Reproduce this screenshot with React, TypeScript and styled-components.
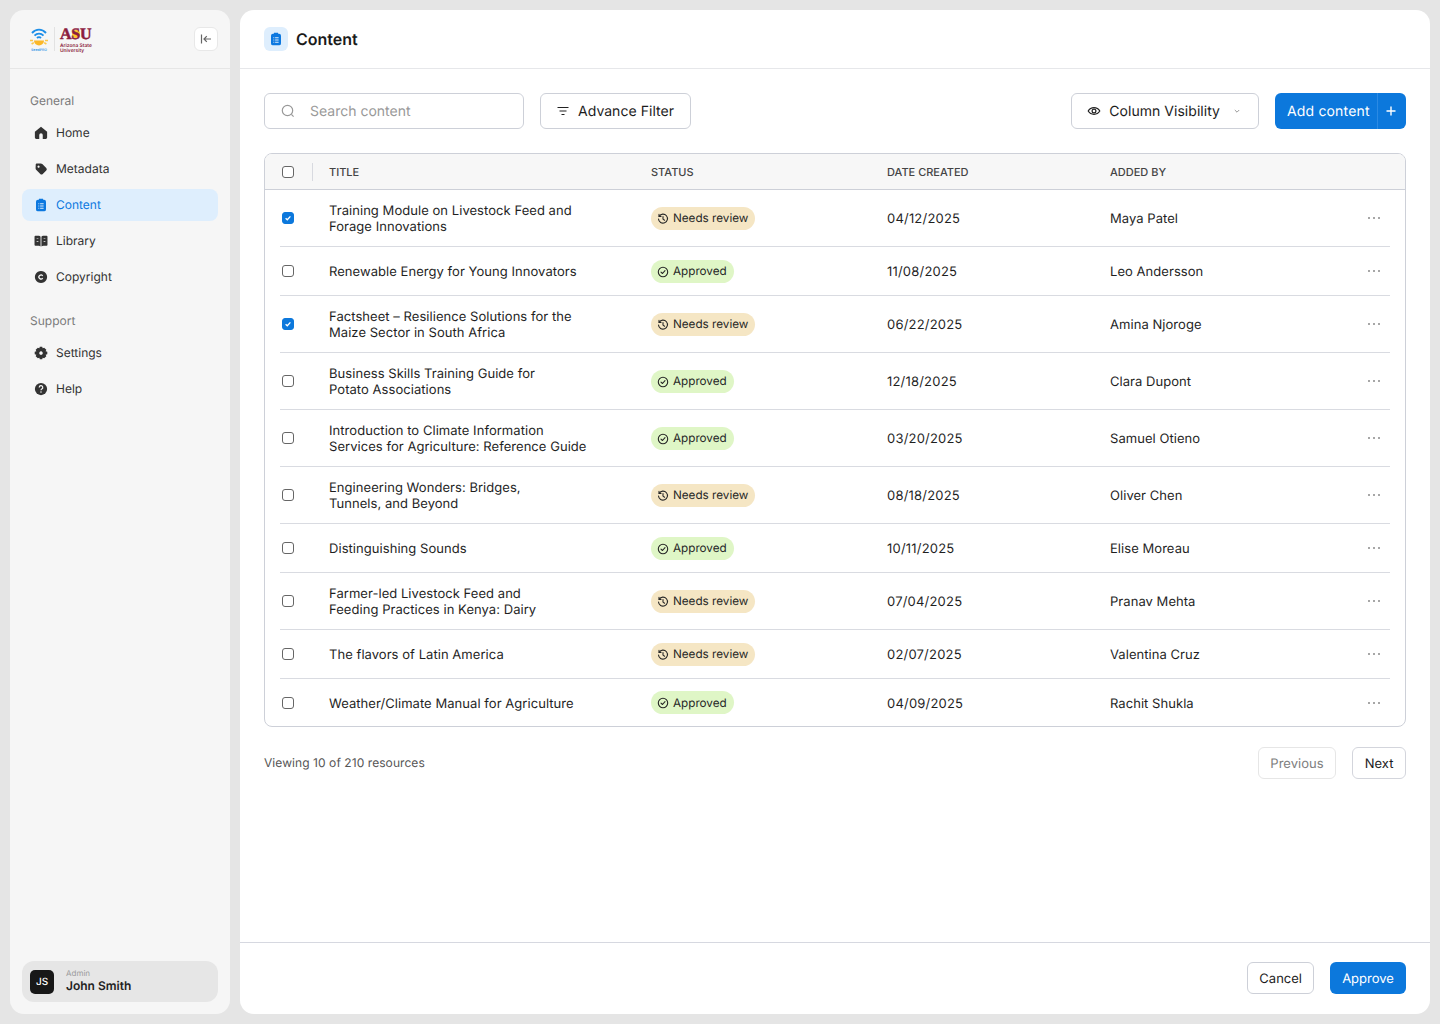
import React from "react";
import styled, { createGlobalStyle } from "styled-components";

const Global = createGlobalStyle`
  * { box-sizing: border-box; }
  html, body { margin: 0; padding: 0; }
  body { background: #e5e5e5; font-family: Inter, "Noto Sans", sans-serif; color: #1c1c1c; text-rendering: geometricPrecision; }
`;

const Page = styled.div`
  width: 1440px; height: 1024px; padding: 10px; display: flex; gap: 10px;
`;
const Sidebar = styled.aside`
  width: 220px; background: #f6f6f6; border-radius: 14px; display: flex; flex-direction: column; overflow: hidden;
`;
const SideHead = styled.div`
  height: 59px; flex: none; border-bottom: 1px solid #e6e6e6; display: flex; align-items: center; justify-content: space-between; padding: 0 12px 0 19px;
`;
const Logo = styled.div`display: flex; align-items: center; gap: 5px;`;
const SeedMark = styled.div`display: flex; flex-direction: column; align-items: center; width: 20px;`;
const SeedText = styled.span`font-size: 3.5px; line-height: 4px; font-weight: 600; color: #3f9be8; white-space: nowrap;`;
const LogoRule = styled.div`width: 1px; height: 24px; background: #e2e2e2;`;
const AsuMark = styled.div`display: flex; flex-direction: column; color: #8c1d40; position: relative; padding-top: 1px;`;
const AsuLetters = styled.span`position: relative; font-family: "Liberation Serif", serif; font-weight: 700; font-size: 16px; letter-spacing: -0.2px; -webkit-text-stroke: 0.5px #8c1d40;`;
const AsuSun = styled.i`position: absolute; left: 12px; top: 5px; width: 8px; height: 8px; border-radius: 50%; background: #ffc627;`;
const AsuName = styled.span`font-size: 4.9px; line-height: 5px; font-weight: 600; white-space: nowrap;`;
const Collapse = styled.button`
  width: 24px; height: 24px; padding: 0; background: #fff; border: 1px solid #e8e8e8; border-radius: 6px; display: flex; align-items: center; justify-content: center; color: #666;
`;
const Nav = styled.nav`flex: 1; padding: 24px 12px 0; display: flex; flex-direction: column;`;
const NavLabel = styled.div<{ $second?: boolean }>`
  font-size: 12px; line-height: 16px; color: #7b7b7b; padding-left: 8px; margin-top: ${p => (p.$second ? 20 : 0)}px; margin-bottom: 8px;
`;
const NavList = styled.div`display: flex; flex-direction: column; gap: 4px;`;
const NavItem = styled.a<{ $active?: boolean }>`
  height: 32px; border-radius: 8px; display: flex; align-items: center; gap: 8px; padding: 0 0 1px 12px; font-size: 12px;
  background: ${p => (p.$active ? "#deeefd" : "transparent")}; color: ${p => (p.$active ? "#0c78e0" : "#333")};
`;
const NavIcon = styled.svg`width: 14px; height: 14px; flex: none; fill: currentColor;`;
const UserCard = styled.div`
  margin: 0 12px 12px; height: 41px; border-radius: 12px; background: #e6e6e6; display: flex; align-items: center; gap: 12px; padding-left: 8px;
`;
const Avatar = styled.div`
  width: 24px; height: 24px; border-radius: 5px; background: #181818; color: #fff; font-size: 10px; font-weight: 500; display: flex; align-items: center; justify-content: center;
`;
const UserText = styled.div`display: flex; flex-direction: column; padding-bottom: 2px;`;
const UserRole = styled.span`font-size: 8px; line-height: 9px; color: #9a9a9a;`;
const UserName = styled.span`font-size: 12px; line-height: 15px; font-weight: 600; color: #222;`;

const Main = styled.main`
  width: 1190px; background: #fff; border-radius: 14px; display: flex; flex-direction: column; overflow: hidden;
`;
const MainHead = styled.header`
  height: 59px; flex: none; border-bottom: 1px solid #e6e7ea; display: flex; align-items: center; gap: 8px; padding-left: 24px;
`;
const HeadIcon = styled.div`
  width: 24px; height: 24px; border-radius: 6px; background: #deeefd; color: #0c78e0; display: flex; align-items: center; justify-content: center;
`;
const Title = styled.h1`margin: 0; font-size: 16px; font-weight: 600; color: #1a1a1a;`;
const Body = styled.div`flex: 1; padding: 24px 24px 0;`;
const Toolbar = styled.div`display: flex; align-items: center; gap: 16px; margin-bottom: 24px;`;
const Search = styled.div`
  width: 260px; height: 36px; border: 1px solid #cdd0d8; border-radius: 6px; display: flex; align-items: center; gap: 14px; padding-left: 15px; color: #999; font-size: 14px;
`;
const OutlineBtn = styled.button<{ $h?: number; $px?: number }>`
  height: ${p => p.$h ?? 36}px; padding: 0 ${p => p.$px ?? 16}px 0 ${p => p.$px ?? 15}px; background: #fff; border: 1px solid #cdd0d8; border-radius: 6px; display: flex; align-items: center; gap: 8px;
  font-family: inherit; font-size: 14px; font-weight: 400; letter-spacing: 0.04px; color: #1c1c1c; text-rendering: geometricPrecision;
`;
const CancelBtn = styled(OutlineBtn)`font-size: 13px; padding-top: 2px; letter-spacing: 0;`;
const Spacer = styled.div`flex: 1;`;
const Chevron = styled.span`margin-left: 4px; color: #999; display: flex;`;
const AddBtn = styled.button`
  width: 131px; height: 36px; padding: 0; background: #0c78dc; border: 0; border-radius: 6px; display: flex; align-items: stretch; color: #fff; font-family: inherit; font-size: 14px; letter-spacing: 0.16px; text-rendering: geometricPrecision;
`;
const AddLabel = styled.span`flex: 1; display: flex; align-items: center; padding-left: 12px; border-right: 1px solid #2b8ae4;`;
const AddPlus = styled.span`width: 28px; padding-right: 2px; display: flex; align-items: center; justify-content: center;`;

const Table = styled.div`border: 1px solid #cdd0d8; border-radius: 8px; overflow: hidden;`;
const HeadRow = styled.div`
  height: 36px; background: #f7f7f7; border-bottom: 1px solid #cdd0d8; padding: 0 15px; display: grid; grid-template-columns: 49px 322px 236px 223px 1fr; align-items: center;
  font-size: 11px; font-weight: 500; color: #444;
`;
const CheckHead = styled.div`display: flex; align-items: center; gap: 18px; height: 100%;`;
const HeadRule = styled.i`width: 1px; height: 18px; background: #d8dae0;`;
const Row = styled.div<{ $tall?: boolean; $last?: boolean }>`
  margin: 0 15px; height: ${p => (p.$tall ? 57 : p.$last ? 47 : 49)}px; border-bottom: ${p => (p.$last ? "none" : "1px solid #d9dbe1")};
  display: grid; grid-template-columns: 49px 322px 236px 223px 1fr 22px; align-items: center; font-size: 13px; line-height: 16px; color: #1f1f1f;
`;
const Cell = styled.div<{ $date?: boolean }>`
  padding-top: 2px; letter-spacing: ${p => (p.$date ? 0.2 : 0.05)}px;
`;
const Check = styled.input`
  appearance: none; margin: 0 0 0 2px; width: 12px; height: 12px; border: 1px solid #666; border-radius: 3px; background: #fff; display: block;
  &:checked {
    border-color: #0c78dc; background: #0c78dc center / 8px 8px no-repeat;
    background-image: url("data:image/svg+xml,%3Csvg xmlns='http://www.w3.org/2000/svg' viewBox='0 0 8 8'%3E%3Cpath d='M1.6 4.2 3.3 5.8 6.4 2.4' fill='none' stroke='white' stroke-width='1.3'/%3E%3C/svg%3E");
  }
`;
const Pill = styled.span<{ $ok?: boolean }>`
  display: inline-flex; align-items: center; gap: 4px; height: 23px; padding: 0 7px 0 6px; border-radius: 12px; font-size: 11.7px; color: #262626;
  background: ${p => (p.$ok ? "#dff6c6" : "#f5e6c4")};
`;
const PillIcon = styled.svg`width: 12px; height: 12px; fill: none; stroke: currentColor; stroke-width: 1.1; flex: none; margin-top: 1px;`;
const Dots = styled.span`display: flex; gap: 3px;`;
const Dot = styled.i`width: 2px; height: 2px; border-radius: 50%; background: #8a8a8a;`;
const Pager = styled.div`margin-top: 20px; display: flex; align-items: center; justify-content: space-between;`;
const Viewing = styled.span`font-size: 12px; letter-spacing: 0.07px; color: #555; padding-bottom: 2px;`;
const PagerBtns = styled.div`display: flex; gap: 16px;`;
const PageBtn = styled(OutlineBtn) <{ $off?: boolean }>`
  height: 32px; padding: 2px 11.5px 0; font-size: 13px; letter-spacing: 0.03px; border-color: ${p => (p.$off ? "#e6e6e6" : "#d3d5dc")}; color: ${p => (p.$off ? "#808080" : "#1c1c1c")};
`;
const Footer = styled.footer`
  height: 72px; flex: none; border-top: 1px solid #d6d8e0; display: flex; align-items: center; justify-content: flex-end; gap: 16px; padding: 0 24px 1px 0;
`;
const Approve = styled.button`
  width: 76px; height: 32px; background: #0c78dc; color: #fff; border: 0; border-radius: 6px; font-family: inherit; font-size: 13px; padding: 2px 0 0; text-rendering: geometricPrecision;
`;

const Ic: Record<string, React.ReactNode> = {
  home: <path d="M8 .9 15 6.6V13.2a1.6 1.6 0 0 1-1.6 1.6H10V10.4a2 2 0 0 0-4 0V14.8H2.6A1.6 1.6 0 0 1 1 13.2V6.6Z" />,
  tag: <path fillRule="evenodd" d="M2 2.6A1 1 0 0 1 3 1.6H7.6C8.4 1.6 9 1.9 9.5 2.4L14 6.9A2 2 0 0 1 14 9.7L10 13.7A2 2 0 0 1 7.2 13.7L2.7 9.2A3 3 0 0 1 1.8 7ZM5.2 4.1A1.2 1.2 0 1 0 5.21 4.1Z" />,
  content: <path fillRule="evenodd" d="M5.6 .8H10.4V2H11.5A2.2 2.2 0 0 1 13.7 4.2V13A2.2 2.2 0 0 1 11.5 15.2H4.5A2.2 2.2 0 0 1 2.3 13V4.2A2.2 2.2 0 0 1 4.5 2H5.6ZM5 6V7H6V6ZM7 6V7H11V6ZM5 8.6V9.6H6V8.6ZM7 8.6V9.6H11V8.6ZM5 11.2V12.2H6V11.2ZM7 11.2V12.2H11V11.2Z" />,
  library: <path fillRule="evenodd" d="M.6 3A1 1 0 0 1 1.6 2H5C6 2 7 2.4 7.5 3.2V14.4C7 13.8 6 13.4 5 13.4H1.6A1 1 0 0 1 .6 12.4ZM8.5 3.2C9 2.4 10 2 11 2H14.4A1 1 0 0 1 15.4 3V12.4A1 1 0 0 1 14.4 13.4H11C10 13.4 9 13.8 8.5 14.4ZM3 5V5.8H5V5ZM11 5V5.8H13V5ZM3 8V8.8H5V8ZM11 8V8.8H13V8Z" />,
  copyright: <path fillRule="evenodd" d="M8 1A7 7 0 1 1 7.99 1ZM10.5 9.6A3 3 0 1 1 10.5 6.4L9.4 7.2A1.6 1.6 0 1 0 9.4 8.8Z" />,
  settings: <path fillRule="evenodd" d="M6.6 .8H9.4L9.9 2.7 11.6 1.9 14.1 4.4 13.3 6.1 15.2 6.6V9.4L13.3 9.9 14.1 11.6 11.6 14.1 9.9 13.3 9.4 15.2H6.6L6.1 13.3 4.4 14.1 1.9 11.6 2.7 9.9.8 9.4V6.6L2.7 6.1 1.9 4.4 4.4 1.9 6.1 2.7ZM8 6A2 2 0 1 0 8.01 6Z" />,
};

const Glyph = ({ name }: { name: string }) => <NavIcon viewBox="0 0 16 16">{Ic[name]}</NavIcon>;

const HelpGlyph = () => (
  <NavIcon viewBox="0 0 16 16">
    <circle cx="8" cy="8" r="7" />
    <path d="M6 6.3A2 2 0 1 1 8.9 8C8.2 8.4 8 8.7 8 9.4" fill="none" stroke="#f6f6f6" strokeWidth="1.4" />
    <circle cx="8" cy="11.4" r="0.9" fill="#f6f6f6" />
  </NavIcon>
);

const ClockIcon = () => (
  <PillIcon viewBox="0 0 12 12">
    <path d="M2.2 3.2A4.5 4.5 0 1 1 1.5 6" strokeLinecap="round" />
    <path d="M2 1.4V3.4H4M6 3.6V6.1L7.6 7.2" strokeLinecap="round" strokeLinejoin="round" />
  </PillIcon>
);
const OkIcon = () => (
  <PillIcon viewBox="0 0 12 12">
    <circle cx="6" cy="6" r="4.7" />
    <path d="M4 6.1 5.5 7.5 8 4.7" strokeLinecap="round" strokeLinejoin="round" />
  </PillIcon>
);

type R = { t: string[]; ok: boolean; d: string; by: string; c?: boolean };
const rows: R[] = [
  { t: ["Training Module on Livestock Feed and", "Forage Innovations"], ok: false, d: "04/12/2025", by: "Maya Patel", c: true },
  { t: ["Renewable Energy for Young Innovators"], ok: true, d: "11/08/2025", by: "Leo Andersson" },
  { t: ["Factsheet – Resilience Solutions for the", "Maize Sector in South Africa"], ok: false, d: "06/22/2025", by: "Amina Njoroge", c: true },
  { t: ["Business Skills Training Guide for", "Potato Associations"], ok: true, d: "12/18/2025", by: "Clara Dupont" },
  { t: ["Introduction to Climate Information", "Services for Agriculture: Reference Guide"], ok: true, d: "03/20/2025", by: "Samuel Otieno" },
  { t: ["Engineering Wonders: Bridges,", "Tunnels, and Beyond"], ok: false, d: "08/18/2025", by: "Oliver Chen" },
  { t: ["Distinguishing Sounds"], ok: true, d: "10/11/2025", by: "Elise Moreau" },
  { t: ["Farmer-led Livestock Feed and", "Feeding Practices in Kenya: Dairy"], ok: false, d: "07/04/2025", by: "Pranav Mehta" },
  { t: ["The flavors of Latin America"], ok: false, d: "02/07/2025", by: "Valentina Cruz" },
  { t: ["Weather/Climate Manual for Agriculture"], ok: true, d: "04/09/2025", by: "Rachit Shukla" },
];

const nav1 = [["home", "Home"], ["tag", "Metadata"], ["content", "Content"], ["library", "Library"], ["copyright", "Copyright"]];

export default function App() {
  return (
    <Page>
      <Global />
      <Sidebar>
        <SideHead>
          <Logo>
            <SeedMark>
              <svg width="20" height="21" viewBox="0 0 20 21" fill="none">
                <path d="M3 6C7 1.5 13 1.5 17 6M5.5 8.6C8 6 12 6 14.5 8.6M8 11C9 10 11 10 12 11" stroke="#1e8fe8" strokeWidth="1.9" />
                <path d="M5 13.5H15A5 5 0 0 1 5 13.5Z" fill="#fbb829" />
                <path d="M1 13.5H4M16 13.5H19M2.6 17 4.8 15.6M17.4 17 15.2 15.6" stroke="#fbc84a" strokeWidth="1.6" />
              </svg>
              <SeedText>SeedPRO</SeedText>
            </SeedMark>
            <LogoRule />
            <AsuMark>
              <AsuSun />
              <AsuLetters>ASU</AsuLetters>
              <AsuName>Arizona State</AsuName>
              <AsuName>University</AsuName>
            </AsuMark>
          </Logo>
          <Collapse aria-label="Collapse">
            <svg width="14" height="14" viewBox="0 0 14 14" fill="none" stroke="currentColor" strokeWidth="1.2">
              <path d="M2.5 2.5V11.5M12 7H5M7.8 4.2 5 7 7.8 9.8" />
            </svg>
          </Collapse>
        </SideHead>
        <Nav>
          <NavLabel>General</NavLabel>
          <NavList>
            {nav1.map(([i, l]) => (
              <NavItem key={l} $active={l === "Content"}>
                <Glyph name={i} />
                {l}
              </NavItem>
            ))}
          </NavList>
          <NavLabel $second>Support</NavLabel>
          <NavList>
            <NavItem><Glyph name="settings" />Settings</NavItem>
            <NavItem><HelpGlyph />Help</NavItem>
          </NavList>
        </Nav>
        <UserCard>
          <Avatar>JS</Avatar>
          <UserText>
            <UserRole>Admin</UserRole>
            <UserName>John Smith</UserName>
          </UserText>
        </UserCard>
      </Sidebar>
      <Main>
        <MainHead>
          <HeadIcon><Glyph name="content" /></HeadIcon>
          <Title>Content</Title>
        </MainHead>
        <Body>
          <Toolbar>
            <Search>
              <svg width="16" height="16" viewBox="0 0 16 16" fill="none" stroke="#999" strokeWidth="1.2">
                <circle cx="7.5" cy="7.5" r="5.2" />
                <path d="M11.4 11.4 13.6 13.6" />
              </svg>
              Search content
            </Search>
            <OutlineBtn>
              <svg width="14" height="14" viewBox="0 0 14 14" fill="none" stroke="#222" strokeWidth="1.2">
                <path d="M1.5 3.5H12.5M3.5 7H10.5M5.5 10.5H8.5" />
              </svg>
              Advance Filter
            </OutlineBtn>
            <Spacer />
            <OutlineBtn>
              <svg width="14" height="14" viewBox="0 0 14 14" fill="none" stroke="#222" strokeWidth="1.2">
                <path d="M1.2 7C3.8 2.6 10.2 2.6 12.8 7C10.2 11.4 3.8 11.4 1.2 7Z" />
                <circle cx="7" cy="7" r="1.9" />
              </svg>
              Column Visibility
              <Chevron>
                <svg width="10" height="10" viewBox="0 0 10 10" fill="none" stroke="currentColor" strokeWidth="1">
                  <path d="M2.8 4 5 6.2 7.2 4" />
                </svg>
              </Chevron>
            </OutlineBtn>
            <AddBtn>
              <AddLabel>Add content</AddLabel>
              <AddPlus>
                <svg width="12" height="12" viewBox="0 0 12 12" fill="none" stroke="#fff" strokeWidth="1.4">
                  <path d="M6 1.5V10.5M1.5 6H10.5" />
                </svg>
              </AddPlus>
            </AddBtn>
          </Toolbar>
          <Table>
            <HeadRow>
              <CheckHead>
                <Check type="checkbox" readOnly />
                <HeadRule />
              </CheckHead>
              <span>TITLE</span>
              <span>STATUS</span>
              <span>DATE CREATED</span>
              <span>ADDED BY</span>
            </HeadRow>
            {rows.map((r, i) => (
              <Row key={r.by} $tall={r.t.length > 1} $last={i === rows.length - 1}>
                <Check type="checkbox" readOnly checked={!!r.c} />
                <Cell>{r.t.map(x => <div key={x}>{x}</div>)}</Cell>
                <div>
                  <Pill $ok={r.ok}>
                    {r.ok ? <OkIcon /> : <ClockIcon />}
                    {r.ok ? "Approved" : "Needs review"}
                  </Pill>
                </div>
                <Cell $date>{r.d}</Cell>
                <Cell>{r.by}</Cell>
                <Dots><Dot /><Dot /><Dot /></Dots>
              </Row>
            ))}
          </Table>
          <Pager>
            <Viewing>Viewing 10 of 210 resources</Viewing>
            <PagerBtns>
              <PageBtn $off>Previous</PageBtn>
              <PageBtn>Next</PageBtn>
            </PagerBtns>
          </Pager>
        </Body>
        <Footer>
          <CancelBtn $h={32} $px={11}>Cancel</CancelBtn>
          <Approve>Approve</Approve>
        </Footer>
      </Main>
    </Page>
  );
}
